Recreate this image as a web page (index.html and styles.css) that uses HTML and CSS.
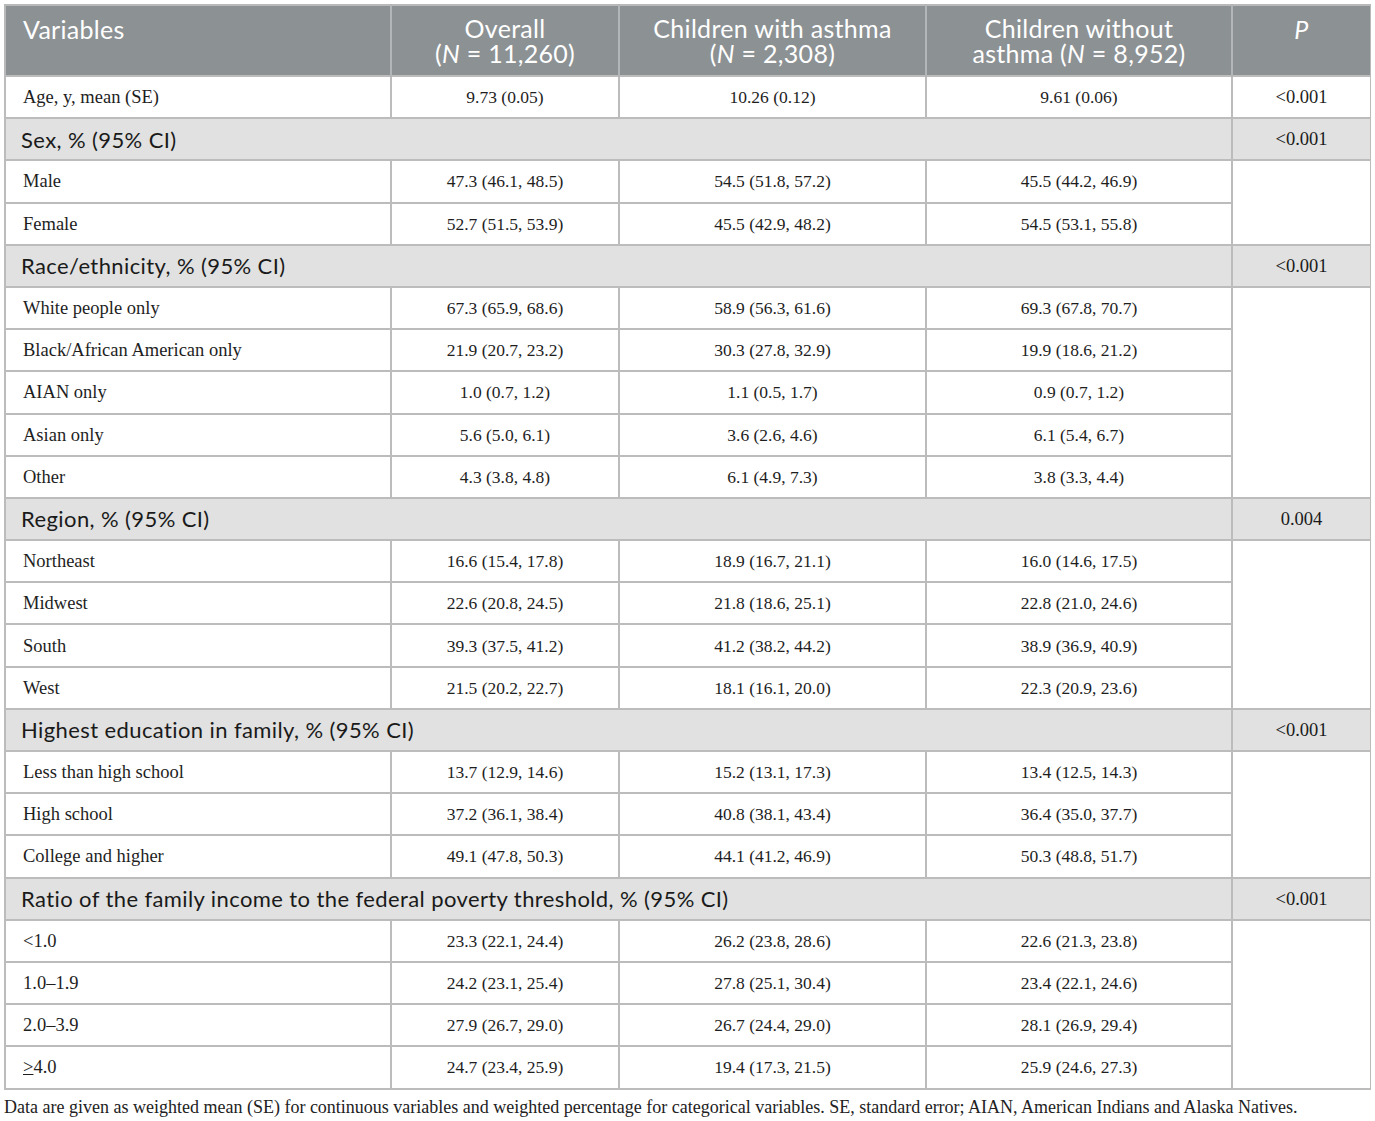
FILE: index.html
```html
<!DOCTYPE html>
<html>
  <head>
    <meta charset="utf-8" />
    <title>Table 1</title>
    <link rel="stylesheet" href="styles.css">
  </head>
  <body>
    <table class="dataTable">
      <colgroup>
        <col class="colVar">
        <col class="colAll">
        <col class="colWith">
        <col class="colWithout">
        <col class="colP">
      </colgroup>
      <thead>
        <tr>
          <th class="first">Variables</th>
          <th>Overall<br>(<i>N</i> = 11,260)</th>
          <th>Children with asthma<br>(<i>N</i> = 2,308)</th>
          <th>Children without<br>asthma (<i>N</i> = 8,952)</th>
          <th class="pHead"><i>P</i></th>
        </tr>
      </thead>
      <tbody>
        <tr>
          <td class="label">Age, y, mean (SE)</td>
          <td>9.73 (0.05)</td>
          <td>10.26 (0.12)</td>
          <td>9.61 (0.06)</td>
          <td class="pVal">&lt;0.001</td>
        </tr>
        <tr class="section">
          <td colspan="4">Sex, % (95% CI)</td>
          <td class="pVal">&lt;0.001</td>
        </tr>
        <tr>
          <td class="label">Male</td>
          <td>47.3 (46.1, 48.5)</td>
          <td>54.5 (51.8, 57.2)</td>
          <td>45.5 (44.2, 46.9)</td>
          <td rowspan="2"></td>
        </tr>
        <tr>
          <td class="label">Female</td>
          <td>52.7 (51.5, 53.9)</td>
          <td>45.5 (42.9, 48.2)</td>
          <td>54.5 (53.1, 55.8)</td>
        </tr>
        <tr class="section">
          <td colspan="4">Race/ethnicity, % (95% CI)</td>
          <td class="pVal">&lt;0.001</td>
        </tr>
        <tr>
          <td class="label">White people only</td>
          <td>67.3 (65.9, 68.6)</td>
          <td>58.9 (56.3, 61.6)</td>
          <td>69.3 (67.8, 70.7)</td>
          <td rowspan="5"></td>
        </tr>
        <tr>
          <td class="label">Black/African American only</td>
          <td>21.9 (20.7, 23.2)</td>
          <td>30.3 (27.8, 32.9)</td>
          <td>19.9 (18.6, 21.2)</td>
        </tr>
        <tr>
          <td class="label">AIAN only</td>
          <td>1.0 (0.7, 1.2)</td>
          <td>1.1 (0.5, 1.7)</td>
          <td>0.9 (0.7, 1.2)</td>
        </tr>
        <tr>
          <td class="label">Asian only</td>
          <td>5.6 (5.0, 6.1)</td>
          <td>3.6 (2.6, 4.6)</td>
          <td>6.1 (5.4, 6.7)</td>
        </tr>
        <tr>
          <td class="label">Other</td>
          <td>4.3 (3.8, 4.8)</td>
          <td>6.1 (4.9, 7.3)</td>
          <td>3.8 (3.3, 4.4)</td>
        </tr>
        <tr class="section">
          <td colspan="4">Region, % (95% CI)</td>
          <td class="pVal">0.004</td>
        </tr>
        <tr>
          <td class="label">Northeast</td>
          <td>16.6 (15.4, 17.8)</td>
          <td>18.9 (16.7, 21.1)</td>
          <td>16.0 (14.6, 17.5)</td>
          <td rowspan="4"></td>
        </tr>
        <tr>
          <td class="label">Midwest</td>
          <td>22.6 (20.8, 24.5)</td>
          <td>21.8 (18.6, 25.1)</td>
          <td>22.8 (21.0, 24.6)</td>
        </tr>
        <tr>
          <td class="label">South</td>
          <td>39.3 (37.5, 41.2)</td>
          <td>41.2 (38.2, 44.2)</td>
          <td>38.9 (36.9, 40.9)</td>
        </tr>
        <tr>
          <td class="label">West</td>
          <td>21.5 (20.2, 22.7)</td>
          <td>18.1 (16.1, 20.0)</td>
          <td>22.3 (20.9, 23.6)</td>
        </tr>
        <tr class="section">
          <td colspan="4">Highest education in family, % (95% CI)</td>
          <td class="pVal">&lt;0.001</td>
        </tr>
        <tr>
          <td class="label">Less than high school</td>
          <td>13.7 (12.9, 14.6)</td>
          <td>15.2 (13.1, 17.3)</td>
          <td>13.4 (12.5, 14.3)</td>
          <td rowspan="3"></td>
        </tr>
        <tr>
          <td class="label">High school</td>
          <td>37.2 (36.1, 38.4)</td>
          <td>40.8 (38.1, 43.4)</td>
          <td>36.4 (35.0, 37.7)</td>
        </tr>
        <tr>
          <td class="label">College and higher</td>
          <td>49.1 (47.8, 50.3)</td>
          <td>44.1 (41.2, 46.9)</td>
          <td>50.3 (48.8, 51.7)</td>
        </tr>
        <tr class="section">
          <td colspan="4">Ratio of the family income to the federal poverty threshold, % (95% CI)</td>
          <td class="pVal">&lt;0.001</td>
        </tr>
        <tr>
          <td class="label">&lt;1.0</td>
          <td>23.3 (22.1, 24.4)</td>
          <td>26.2 (23.8, 28.6)</td>
          <td>22.6 (21.3, 23.8)</td>
          <td rowspan="4"></td>
        </tr>
        <tr>
          <td class="label">1.0–1.9</td>
          <td>24.2 (23.1, 25.4)</td>
          <td>27.8 (25.1, 30.4)</td>
          <td>23.4 (22.1, 24.6)</td>
        </tr>
        <tr>
          <td class="label">2.0–3.9</td>
          <td>27.9 (26.7, 29.0)</td>
          <td>26.7 (24.4, 29.0)</td>
          <td>28.1 (26.9, 29.4)</td>
        </tr>
        <tr>
          <td class="label"><u>&gt;</u>4.0</td>
          <td>24.7 (23.4, 25.9)</td>
          <td>19.4 (17.3, 21.5)</td>
          <td>25.9 (24.6, 27.3)</td>
        </tr>
      </tbody>
    </table>
    <p class="note">Data are given as weighted mean (SE) for continuous variables and weighted percentage for categorical variables. SE, standard error; AIAN, American Indians and Alaska Natives.</p>
  </body>
</html>
```

FILE: styles.css
```css
html {
  background-color: white;
  color: #1e1e1e;
  font-family: "Liberation Serif", "Times New Roman", serif;
}

body {
  margin: 4px;
}

.dataTable {
  width: 1366px;
  border-collapse: collapse;
  table-layout: fixed;
  border: 2px solid #b9b9b9;
}

.colVar { width: 386px; }
.colAll { width: 228px; }
.colWith { width: 307px; }
.colWithout { width: 306px; }
.colP { width: 139px; }

.dataTable th {
  background-color: #8c9194;
  color: white;
  font-family: Lato, "Open Sans", sans-serif;
  font-weight: 400;
  font-size: 25px;
  letter-spacing: 0.3px;
  line-height: 25px;
  height: 71px;
  padding: 6px 8px 6px;
  text-align: center;
  vertical-align: middle;
  border-left: 2px solid #b3b6b8;
  box-sizing: border-box;
}

.dataTable th.first {
  text-align: left;
  vertical-align: top;
  padding: 11px 17px;
  border-left: none;
}

.dataTable th.pHead {
  vertical-align: top;
  padding-top: 11px;
}

.dataTable td {
  border: 2px solid #bcbcbc;
  height: 42.2px;
  padding: 1px 8px 0;
  font-size: 17.5px;
  text-align: center;
  vertical-align: middle;
  box-sizing: border-box;
}

.dataTable td.label {
  text-align: left;
  padding-left: 17px;
  font-size: 18.5px;
}

.dataTable td.pVal {
  font-size: 18.5px;
}

.section td {
  background-color: #e0e1e0;
  font-family: Lato, "Open Sans", sans-serif;
  font-size: 22px;
  letter-spacing: 0.4px;
  text-align: left;
  padding: 0 8px 0 15px;
  color: #1a1a1a;
}

.section td.pVal {
  font-family: "Liberation Serif", "Times New Roman", serif;
  letter-spacing: 0;
  text-align: center;
  padding: 1px 8px 0;
}

.note {
  margin: 7px 0 0;
  font-size: 18px;
  color: #222;
}
```
